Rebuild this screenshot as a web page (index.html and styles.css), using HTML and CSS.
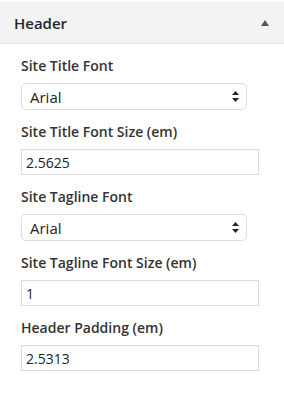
FILE: index.html
```html
<!DOCTYPE html>
<html>
<head>
<meta charset="utf-8">
<link rel="stylesheet" href="styles.css">
</head>
<body>
<div class="panel">
  <div class="panel-head">
    <span class="panel-title">Header</span>
    <svg class="caret" width="8" height="6" viewBox="0 0 8 6"><path d="M4 0 L8 6 L0 6 Z" fill="#555"/></svg>
  </div>
  <div class="controls">
    <div class="control">
      <label class="control-title">Site Title Font</label>
      <div class="select">
        <span>Arial</span>
        <svg class="arrows" width="7" height="11" viewBox="0 0 7 11"><path d="M3.5 0 L7 4 L0 4 Z M0 7 L7 7 L3.5 11 Z" fill="#222"/></svg>
      </div>
    </div>
    <div class="control">
      <label class="control-title">Site Title Font Size (em)</label>
      <input class="text" type="text" value="2.5625">
    </div>
    <div class="control">
      <label class="control-title">Site Tagline Font</label>
      <div class="select">
        <span>Arial</span>
        <svg class="arrows" width="7" height="11" viewBox="0 0 7 11"><path d="M3.5 0 L7 4 L0 4 Z M0 7 L7 7 L3.5 11 Z" fill="#222"/></svg>
      </div>
    </div>
    <div class="control">
      <label class="control-title">Site Tagline Font Size (em)</label>
      <input class="text" type="text" value="1">
    </div>
    <div class="control">
      <label class="control-title">Header Padding (em)</label>
      <input class="text" type="text" value="2.5313">
    </div>
  </div>
</div>
</body>
</html>
```
FILE: styles.css
```css
html, body {
  margin: 0;
  padding: 0;
  background: #fff;
}
body {
  font-family: "Open Sans", "Liberation Sans", sans-serif;
  color: #333;
}
.panel {
  width: 284px;
}
.panel-head {
  height: 41px;
  margin-top: 2px;
  background: #f3f3f3;
  border-bottom: 1px solid #e2e2e2;
  display: flex;
  align-items: center;
  justify-content: space-between;
  padding: 0 15px 0 14px;
}
.panel-title {
  font-size: 15px;
  font-weight: 600;
  color: #23282d;
}
.caret {
  display: block;
}
.controls {
  display: flex;
  flex-direction: column;
  gap: 12px;
  padding: 12px 25px 0 21px;
}
.control {
  display: flex;
  flex-direction: column;
  gap: 7px;
}
.control-title {
  font-size: 14px;
  line-height: 20px;
  font-weight: 600;
  color: #333;
}
.select {
  box-sizing: border-box;
  width: 226px;
  height: 27px;
  border: 1px solid #ddd;
  border-radius: 5px;
  background: #fff;
  display: flex;
  align-items: center;
  justify-content: space-between;
  padding: 0 7px 0 8px;
  font-size: 15px;
  color: #222;
}
.arrows {
  display: block;
}
.text {
  box-sizing: border-box;
  width: 238px;
  height: 26px;
  border: 1px solid #ddd;
  border-radius: 0;
  box-shadow: inset 0 1px 2px rgba(0,0,0,0.04);
  padding: 0 4px;
  margin: 0;
  font-family: "Open Sans", "Liberation Sans", sans-serif;
  font-size: 14px;
  color: #222;
  outline: none;
}
```
